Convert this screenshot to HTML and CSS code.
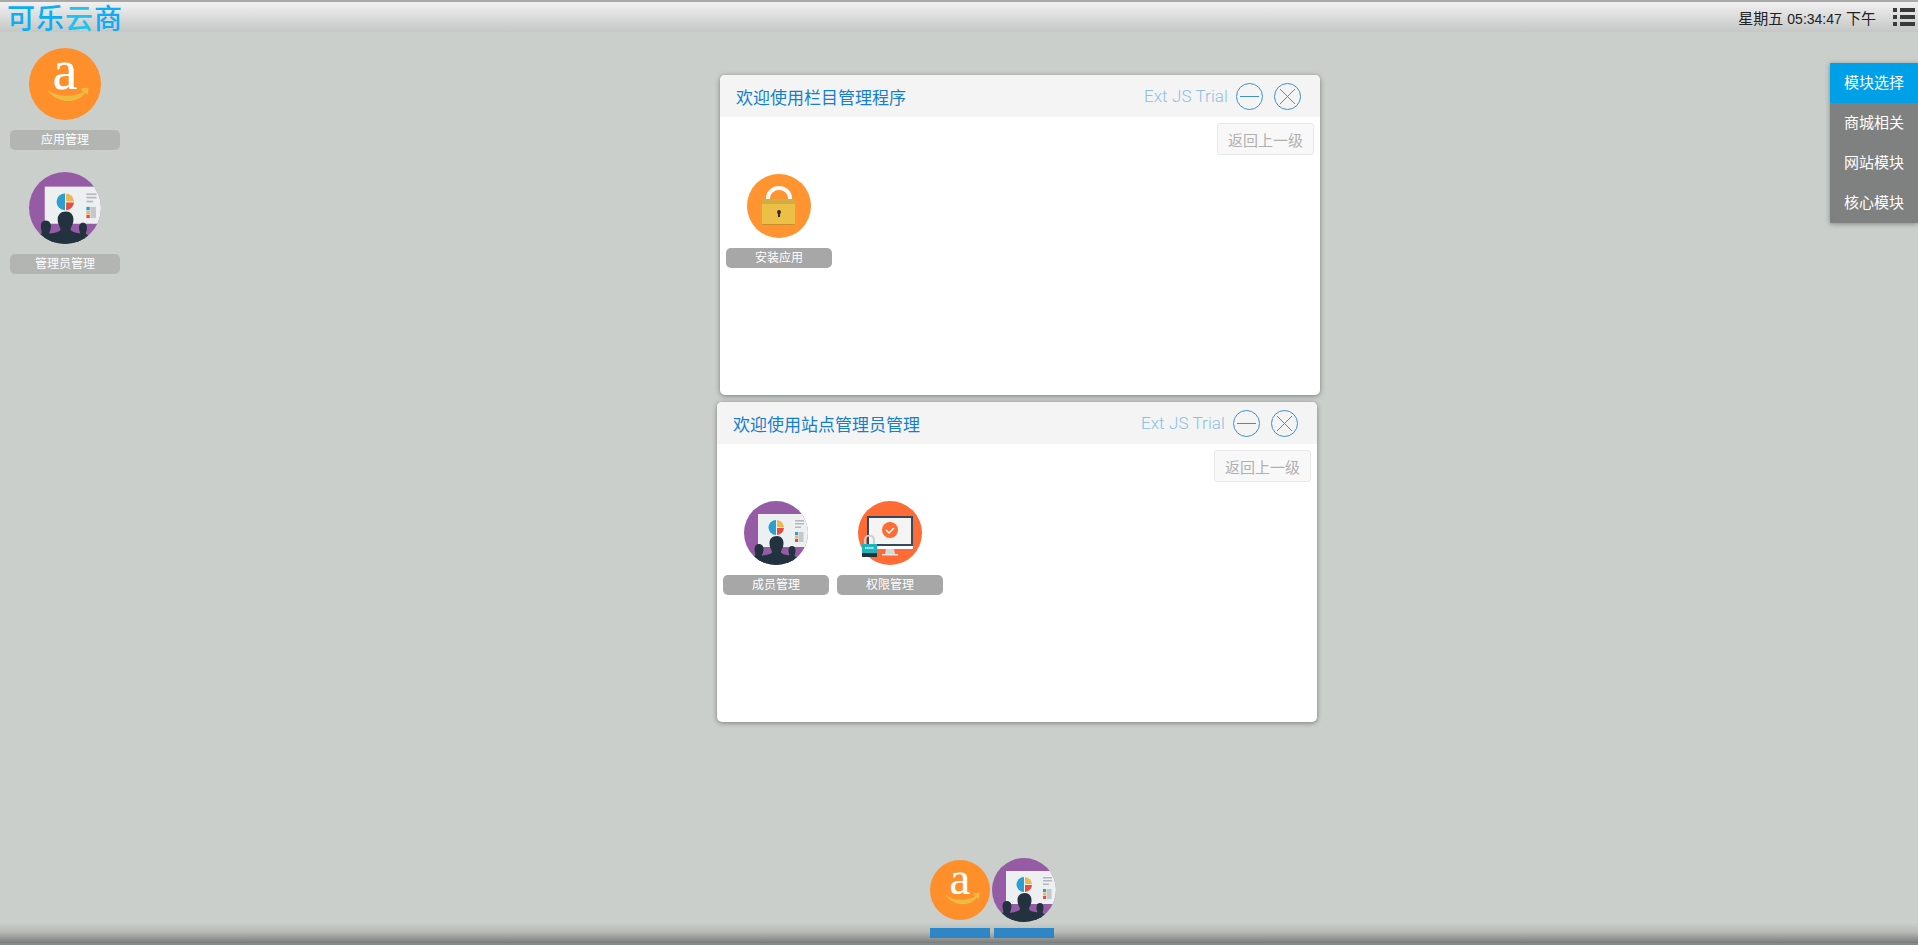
FILE: index.html
```html
<!DOCTYPE html>
<html>
  <head>
    <meta charset="utf-8">
    <title>可乐云商</title>
    <link rel="stylesheet" href="styles.css">
  </head>
  <body>
    <!-- iconos compartidos -->
    <svg class="defs" width="0" height="0">
      <defs>
        <clipPath id="round"><circle cx="32" cy="32" r="32"/></clipPath>
        <symbol id="ico-amazon" viewBox="0 0 64 64">
          <circle cx="32" cy="32" r="32" fill="#ff8f2b"/>
          <text x="32" y="36" text-anchor="middle" class="amazon-a">a</text>
          <path d="M16 37c10 7 23 7 32 2l-2-3 7-1-1 7-2-2c-6 9-24 11-34-3z" fill="#ecbb3f"/>
        </symbol>
        <symbol id="ico-people" viewBox="0 0 64 64">
          <g clip-path="url(#round)">
            <rect width="64" height="64" fill="#965ba5"/>
            <rect x="14" y="13" width="52" height="33" fill="#ecf0f1"/>
            <path d="M32 19a7.500 7.500 0 0 0 0 15z" fill="#2a9fd0"/>
            <path d="M33 19a7.500 7.500 0 0 1 7 7h-7z" fill="#f4b350"/>
            <path d="M33 27h7a7.500 7.500 0 0 1-7 7z" fill="#e74c3c"/>
            <rect x="51" y="19" width="9" height="1.500" fill="#b4b8ba"/>
            <rect x="51" y="22" width="9" height="1.500" fill="#b4b8ba"/>
            <rect x="51" y="25.500" width="6" height="1.500" fill="#b4b8ba"/>
            <rect x="51" y="31" width="3" height="3" fill="#2a9fd0"/>
            <rect x="51" y="34.500" width="3" height="3" fill="#f4b350"/>
            <rect x="51" y="38" width="3" height="3" fill="#e74c3c"/>
            <rect x="54.500" y="31" width="5" height="10" fill="#c4c8ca"/>
            <path d="M33 35c4 0 6.500 3 6.500 7 0 5-2.500 7-2.500 9 0 2 5 3 12 4l2 9H14l2-9c7-1 12-2 12-4 0-2-2.500-4-2.500-9 0-4 2.500-7 7.500-7z" fill="#22323f"/>
            <path d="M15 43c3 0 4.500 2.500 4.500 5 0 4-1.500 5-1.500 7l5 2v7H6v-8l5-1c1-2-.500-3-.500-7 0-3 1.500-5 4.500-5z" fill="#22323f"/>
            <path d="M48 45c2.500 0 3.500 2 3.500 4.500 0 3-1 4-1 5.500l4 2v7H42v-7l3.500-2c0-1.500-1-2.500-1-5.500 0-2.500 1-4.500 3.500-4.500z" fill="#22323f"/>
          </g>
        </symbol>
        <symbol id="ico-lock" viewBox="0 0 64 64">
          <circle cx="32" cy="32" r="32" fill="#ff9430"/>
          <path d="M21 26v-2a11 10 0 0 1 22 0v2" fill="none" stroke="#fbfbfb" stroke-width="4"/>
          <rect x="15" y="25" width="33" height="26" fill="#ecc047"/>
          <rect x="15" y="25" width="33" height="5" fill="#d3ae3e"/>
          <rect x="15" y="50" width="33" height="1" fill="#c98f2f"/>
          <circle cx="32" cy="38" r="2" fill="#3b2a10"/>
          <rect x="31" y="38" width="2" height="5" fill="#3b2a10"/>
        </symbol>
        <symbol id="ico-monitor" viewBox="0 0 64 64" overflow="visible">
          <circle cx="32" cy="32" r="32" fill="#ff6b35"/>
          <rect x="10" y="16" width="44" height="28" fill="#f4f4f2" stroke="#34495e" stroke-width="2"/>
          <rect x="9" y="45" width="46" height="3" fill="#fff"/>
          <path d="M28 48h8l1 5h-10z" fill="#d9d9d6"/>
          <rect x="24" y="53" width="16" height="1.500" fill="#e8e8e6"/>
          <circle cx="32" cy="29" r="8" fill="#ff6b35"/>
          <path d="M28 29l3 3 5-5" fill="none" stroke="#fff" stroke-width="1.500"/>
          <path d="M7 43v-4a4.500 4.500 0 0 1 9 0v4" fill="none" stroke="#c9ced0" stroke-width="2"/>
          <rect x="4" y="43" width="15" height="9" fill="#1db5bd"/>
          <rect x="4" y="52" width="15" height="4" fill="#22323f"/>
          <path d="M7 47h9" stroke="#fff" stroke-width="1.500" stroke-dasharray="1.500 .6"/>
        </symbol>
      </defs>
    </svg>

    <header class="topbar">
      <div class="logo">可乐<em>云</em>商</div>
      <div class="clock">星期五 <span class="clock-time">05:34:47</span> 下午</div>
      <div class="list-btn">
        <i></i><b></b><i></i><b></b><i></i><b></b>
      </div>
    </header>

    <main class="desktop">
      <!-- iconos del escritorio -->
      <div class="shortcuts">
        <div class="shortcut">
          <svg class="icon-lg"><use href="#ico-amazon"/></svg>
          <span class="tag tag-light">应用管理</span>
        </div>
        <div class="shortcut">
          <svg class="icon-lg"><use href="#ico-people"/></svg>
          <span class="tag tag-light">管理员管理</span>
        </div>
      </div>

      <!-- ventana 1 -->
      <section class="win win-one">
        <div class="win-head">
          <h2>欢迎使用栏目管理程序</h2>
          <span class="trial">Ext JS Trial</span>
          <span class="round-btn"><svg viewBox="0 0 27 27"><circle cx="13.500" cy="13.500" r="13"/><path d="M4 13.500h19"/></svg></span>
          <span class="round-btn"><svg viewBox="0 0 27 27"><circle cx="13.500" cy="13.500" r="13"/><path d="M6 6l15 15M21 6L6 21"/></svg></span>
        </div>
        <div class="win-tools"><button class="back-btn">返回上一级</button></div>
        <div class="win-apps">
          <div class="app">
            <svg class="icon-md"><use href="#ico-lock"/></svg>
            <span class="tag">安装应用</span>
          </div>
        </div>
      </section>

      <!-- ventana 2 -->
      <section class="win win-two">
        <div class="win-head">
          <h2>欢迎使用站点管理员管理</h2>
          <span class="trial">Ext JS Trial</span>
          <span class="round-btn"><svg viewBox="0 0 27 27"><circle cx="13.500" cy="13.500" r="13"/><path d="M4 13.500h19"/></svg></span>
          <span class="round-btn"><svg viewBox="0 0 27 27"><circle cx="13.500" cy="13.500" r="13"/><path d="M6 6l15 15M21 6L6 21"/></svg></span>
        </div>
        <div class="win-tools"><button class="back-btn">返回上一级</button></div>
        <div class="win-apps">
          <div class="app">
            <svg class="icon-md"><use href="#ico-people"/></svg>
            <span class="tag">成员管理</span>
          </div>
          <div class="app">
            <svg class="icon-md"><use href="#ico-monitor"/></svg>
            <span class="tag">权限管理</span>
          </div>
        </div>
      </section>

      <!-- menu derecho -->
      <nav class="side-menu">
        <a class="active">模块选择</a>
        <a>商城相关</a>
        <a>网站模块</a>
        <a>核心模块</a>
      </nav>
    </main>

    <footer class="dock">
      <div class="dock-item">
        <svg class="dock-icon"><use href="#ico-amazon"/></svg>
        <span class="dock-bar"></span>
      </div>
      <div class="dock-item dock-item-big">
        <svg class="dock-icon-big"><use href="#ico-people"/></svg>
        <span class="dock-bar"></span>
      </div>
    </footer>
  </body>
</html>
```

FILE: styles.css
```css
* {
  box-sizing: border-box;
}

html,
body {
  height: 100%;
}

body {
  margin: 0;
  display: flex;
  flex-direction: column;
  overflow: hidden;
  background-color: #cacfcc;
  font-family: "Liberation Sans", "Noto Sans CJK SC", sans-serif;
  color: #222;
}

.defs {
  position: absolute;
}

.amazon-a {
  font-family: "Liberation Serif", serif;
  font-size: 50px;
  fill: #fff;
  stroke: #fff;
  stroke-width: .2px;
}

/* barra de arriba */
.topbar {
  height: 32px;
  flex: none;
  display: flex;
  align-items: center;
  padding: 0 3px 0 7px;
  border-top: 2px solid #a9a9a9;
  background: linear-gradient(#f1f1f1, #c5c6c6);
}

.logo {
  flex: 1;
  font-family: "Noto Sans CJK SC", sans-serif;
  font-size: 28px;
  font-weight: 500;
  line-height: 30px;
  letter-spacing: 1px;
  color: #0aaef5;
}

.logo em {
  font-style: normal;
  color: #1cc4f0;
}

.clock {
  font-size: 15px;
  color: #222;
  margin-right: 17px;
}

.clock-time {
  font-size: 14px;
}

.list-btn {
  width: 22px;
  display: grid;
  grid-template-columns: 4px 1fr;
  gap: 3px;
}

.list-btn i,
.list-btn b {
  height: 4px;
  background-color: #3a3a3a;
}

/* escritorio */
.desktop {
  flex: 1;
  position: relative;
}

.shortcuts {
  width: 110px;
  margin-left: 10px;
  padding-top: 16px;
  display: flex;
  flex-direction: column;
  gap: 22px;
}

.shortcut,
.app {
  display: flex;
  flex-direction: column;
  align-items: center;
  gap: 10px;
}

.icon-lg {
  width: 72px;
  height: 72px;
}

.icon-md {
  width: 64px;
  height: 64px;
  overflow: visible;
}

.tag {
  width: 106px;
  height: 20px;
  border-radius: 5px;
  background-color: #a6a7a6;
  color: #fff;
  font-size: 12px;
  line-height: 20px;
  text-align: center;
}

.tag-light {
  width: 110px;
  background-color: #b3b5b3;
}

/* ventanas */
.win {
  position: absolute;
  width: 600px;
  height: 320px;
  display: flex;
  flex-direction: column;
  border-radius: 5px;
  overflow: hidden;
  background-color: #fff;
  box-shadow: 0 1px 5px rgba(0, 0, 0, .4);
}

.win-one {
  left: 720px;
  top: 43px;
}

.win-two {
  left: 717px;
  top: 370px;
}

.win-head {
  height: 42px;
  flex: none;
  display: flex;
  align-items: center;
  padding: 0 19px 0 16px;
  background-color: #f4f4f4;
}

.win-head h2 {
  flex: 1;
  margin: 0;
  font-size: 17px;
  font-weight: normal;
  color: #157fcc;
}

.trial {
  font-family: Roboto, sans-serif;
  font-size: 17px;
  font-weight: 300;
  letter-spacing: .1px;
  color: #8dbfe6;
  margin-right: 8px;
}

.round-btn {
  width: 27px;
  height: 27px;
  margin-left: 11px;
}

.trial + .round-btn {
  margin-left: 0;
}

.round-btn svg {
  display: block;
  fill: none;
  stroke: #3f8fcb;
  stroke-width: 1;
}

.win-tools {
  display: flex;
  justify-content: flex-end;
  padding: 6px 6px 0 0;
}

.back-btn {
  width: 97px;
  height: 32px;
  padding: 0;
  border: 1px solid #e8e8e8;
  border-radius: 3px;
  background-color: #f8f8f8;
  color: #b0b0b0;
  font-family: inherit;
  font-size: 15px;
}

.win-apps {
  display: flex;
  gap: 8px;
  padding: 19px 0 0 6px;
}

/* menu derecho */
.side-menu {
  position: absolute;
  right: 0;
  top: 31px;
  width: 88px;
  display: flex;
  flex-direction: column;
  box-shadow: 0 1px 5px rgba(0, 0, 0, .35);
}

.side-menu a {
  height: 40px;
  background-color: #7f8180;
  color: #fff;
  font-size: 15px;
  line-height: 40px;
  text-align: center;
}

.side-menu a.active {
  background-color: #00a0e9;
}

/* barra de abajo */
.dock {
  height: 87px;
  flex: none;
  display: flex;
  justify-content: center;
  align-items: flex-end;
  gap: 2px;
  padding: 0 0 5px 68px;
  border-bottom: 2px solid #7f8c90;
  background: linear-gradient(rgba(0, 0, 0, 0) 76%, rgba(0, 0, 0, .1) 87%, rgba(0, 0, 0, .4));
}

.dock-item {
  display: flex;
  flex-direction: column;
  align-items: center;
  gap: 8px;
}

.dock-item-big {
  gap: 6px;
}

.dock-icon {
  width: 60px;
  height: 60px;
}

.dock-icon-big {
  width: 64px;
  height: 64px;
}

.dock-bar {
  width: 60px;
  height: 10px;
  background-color: #2f86c6;
}
```
